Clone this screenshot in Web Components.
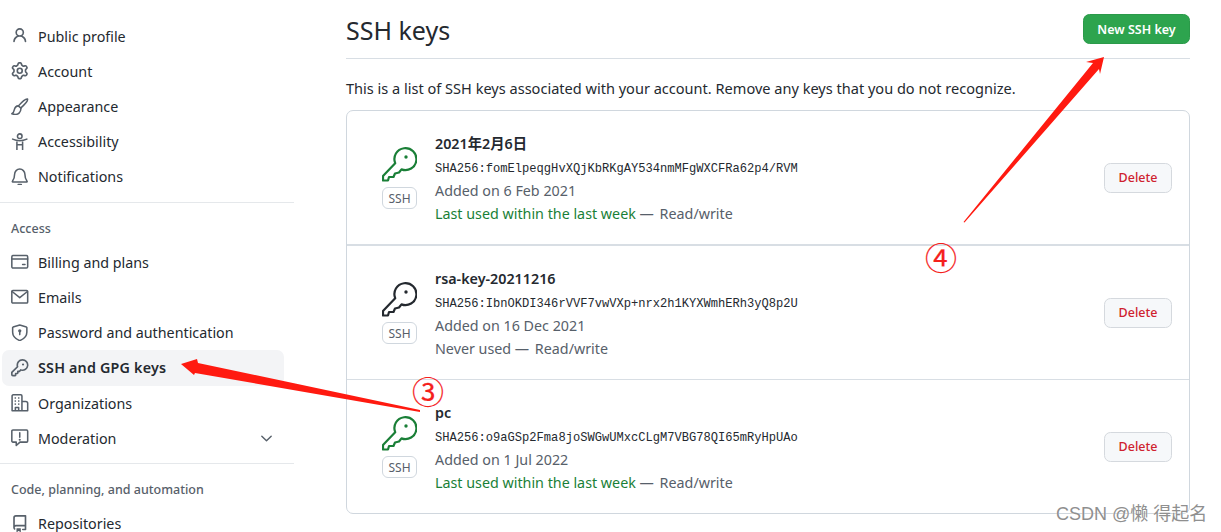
<!DOCTYPE html>
<html lang="en">
<head>
<meta charset="utf-8">
<title>SSH keys</title>
<style>
  html, body { margin: 0; height: 532px; overflow: hidden; background: #fff; }
</style>
</head>
<body>
<gh-settings>
  <side-nav slot="side">
    <nav-item icon="person">Public profile</nav-item>
    <nav-item icon="gear">Account</nav-item>
    <nav-item icon="paintbrush">Appearance</nav-item>
    <nav-item icon="accessibility">Accessibility</nav-item>
    <nav-item icon="bell">Notifications</nav-item>
    <nav-heading>Access</nav-heading>
    <nav-item icon="card">Billing and plans</nav-item>
    <nav-item icon="mail">Emails</nav-item>
    <nav-item icon="shield">Password and authentication</nav-item>
    <nav-item icon="key" selected>SSH and GPG keys</nav-item>
    <nav-item icon="org">Organizations</nav-item>
    <nav-item icon="report" expand>Moderation</nav-item>
    <nav-heading>Code, planning, and automation</nav-heading>
    <nav-item icon="repo">Repositories</nav-item>
  </side-nav>
  <ssh-panel slot="main">
    <key-row used name="2021年2月6日" sha="SHA256:fomElpeqgHvXQjKbRKgAY534nmMFgWXCFRa62p4/RVM" added="Added on 6 Feb 2021" last="Last used within the last week"></key-row>
    <key-row thick name="rsa-key-20211216" sha="SHA256:IbnOKDI346rVVF7vwVXp+nrx2h1KYXWmhERh3yQ8p2U" added="Added on 16 Dec 2021" last="Never used"></key-row>
    <key-row used name="pc" sha="SHA256:o9aGSp2Fma8joSWGwUMxcCLgM7VBG78QI65mRyHpUAo" added="Added on 1 Jul 2022" last="Last used within the last week"></key-row>
  </ssh-panel>
</gh-settings>
<red-notes></red-notes>

<script>
const FONT = '"Noto Sans", "Noto Sans CJK SC", sans-serif';

// 16px octicons, some drawn as strokes
const ICONS = {
  person: '<path fill="currentColor" d="M10.561 8.073a6.005 6.005 0 0 1 3.432 5.142.75.75 0 1 1-1.498.07 4.5 4.5 0 0 0-8.99 0 .75.75 0 0 1-1.498-.07 6.004 6.004 0 0 1 3.431-5.142 3.999 3.999 0 1 1 5.123 0ZM10.5 5a2.5 2.5 0 1 0-5 0 2.5 2.5 0 0 0 5 0Z"/>',
  gear: '<path fill="currentColor" d="M8 0a8.2 8.2 0 0 1 .701.031C9.444.095 9.99.645 10.16 1.29l.288 1.107c.018.066.079.158.212.224.231.114.454.243.668.386.123.082.233.09.299.071l1.103-.303c.644-.176 1.392.021 1.82.63.27.385.506.792.704 1.218.315.675.111 1.422-.364 1.891l-.814.806c-.049.048-.098.147-.088.294.016.257.016.515 0 .772-.01.147.038.246.088.294l.814.806c.475.469.679 1.216.364 1.891a7.977 7.977 0 0 1-.704 1.217c-.428.61-1.176.807-1.82.63l-1.102-.302c-.067-.019-.177-.011-.3.071a5.909 5.909 0 0 1-.668.386c-.133.066-.194.158-.211.224l-.29 1.106c-.168.646-.715 1.196-1.458 1.26a8.006 8.006 0 0 1-1.402 0c-.743-.064-1.289-.614-1.458-1.26l-.289-1.106c-.018-.066-.079-.158-.212-.224a5.738 5.738 0 0 1-.668-.386c-.123-.082-.233-.09-.299-.071l-1.103.303c-.644.176-1.392-.021-1.82-.63a8.12 8.12 0 0 1-.704-1.218c-.315-.675-.111-1.422.363-1.891l.815-.806c.05-.048.098-.147.088-.294a6.214 6.214 0 0 1 0-.772c.01-.147-.038-.246-.088-.294l-.815-.806C.635 6.045.431 5.298.746 4.623a7.92 7.92 0 0 1 .704-1.217c.428-.61 1.176-.807 1.82-.63l1.102.302c.067.019.177.011.3-.071.214-.143.437-.272.668-.386.133-.066.194-.158.211-.224l.29-1.106C6.009.645 6.556.095 7.299.03 7.53.01 7.764 0 8 0Zm-.571 1.525c-.036.003-.108.036-.137.146l-.289 1.105c-.147.561-.549.967-.998 1.189-.173.086-.34.183-.5.29-.417.278-.97.423-1.529.27l-1.103-.303c-.109-.03-.175.016-.195.045-.22.312-.412.644-.573.99-.014.031-.021.11.059.19l.815.806c.411.406.562.957.53 1.456a4.709 4.709 0 0 0 0 .582c.032.499-.119 1.05-.53 1.456l-.815.806c-.081.08-.073.159-.059.19.162.346.353.677.573.989.02.03.085.076.195.046l1.102-.303c.56-.153 1.113-.008 1.53.27.161.107.328.204.501.29.447.222.85.629.997 1.189l.289 1.105c.029.109.101.143.137.146a6.6 6.6 0 0 0 1.142 0c.036-.003.108-.036.137-.146l.289-1.105c.147-.561.549-.967.998-1.189.173-.086.34-.183.5-.29.417-.278.97-.423 1.529-.27l1.103.303c.109.029.175-.016.195-.045.22-.313.411-.644.573-.99.014-.031.021-.11-.059-.19l-.815-.806c-.411-.406-.562-.957-.53-1.456a4.709 4.709 0 0 0 0-.582c-.032-.499.119-1.05.53-1.456l.815-.806c.081-.08.073-.159.059-.19a6.464 6.464 0 0 0-.573-.989c-.02-.03-.085-.076-.195-.046l-1.102.303c-.56.153-1.113.008-1.53-.27a4.44 4.44 0 0 0-.501-.29c-.447-.222-.85-.629-.997-1.189l-.289-1.105c-.029-.11-.101-.143-.137-.146a6.6 6.6 0 0 0-1.142 0ZM11 8a3 3 0 1 1-6 0 3 3 0 0 1 6 0ZM9.5 8a1.5 1.5 0 1 0-3.001.001A1.5 1.5 0 0 0 9.5 8Z"/>',
  paintbrush: '<g class="s"><path d="M15.1.9c-1.3-.5-5.2 2.7-8.3 6.3l2 2c3.6-3.1 6.8-7 6.3-8.3Z"/><path d="M6.8 7.2C4.6 7.3 3.4 8.8 3 10.8c-.3 1.6-1 2.8-2.2 3.6 2.3.9 4.9.9 6.6-.6 1.1-1 1.7-2.6 1.8-4.6"/></g>',
  accessibility: '<g class="s"><circle cx="8" cy="2.9" r="2.1"/><path d="M1.5 5.6c2 .9 4.2 1.4 6.5 1.4s4.500-.5 6.500-1.400M5.400 6.800V15.200M10.600 6.800V15.200M5.400 10.800h5.200"/></g>',
  bell: '<g class="s"><path d="M8 1a4.700 4.700 0 0 0-4.700 4.700c0 2.700-.6 4.700-2 6.500a.3.3 0 0 0 .2.500h13a.3.3 0 0 0 .2-.500c-1.400-1.800-2-3.800-2-6.500A4.700 4.700 0 0 0 8 1Z"/><path d="M6.600 15.200h2.800"/></g>',
  card: '<g class="s"><rect x=".75" y="2.250" width="14.500" height="11.500" rx="1.200"/><path d="M.75 5.400h14.500M10.600 10.500h2.200"/></g>',
  mail: '<g class="s"><rect x=".75" y="2.250" width="14.500" height="11.500" rx="1"/><path d="M1 3.200 8 8.800l7-5.600"/></g>',
  shield: '<g class="s"><path d="M8 .9 1.900 2.800c-.2.100-.4.300-.4.500V7.500c0 3.500 2.500 6 6.500 7.700 4-1.700 6.500-4.200 6.500-7.700V3.300c0-.2-.2-.4-.4-.5Z"/><path d="M8 6.500v3.200"/></g><circle cx="8" cy="6.200" r="1.500" fill="currentColor"/>',
  key: '<path fill="currentColor" d="M10.500 0a5.499 5.499 0 1 1-1.288 10.848l-.932.932a.749.749 0 0 1-.53.22H7v.75a.749.749 0 0 1-.22.53l-.5.5a.749.749 0 0 1-.53.22H5v.75a.749.749 0 0 1-.22.53l-.5.5a.749.749 0 0 1-.53.22h-2A1.750 1.750 0 0 1 0 14.250v-2c0-.199.079-.389.22-.53l4.932-4.932A5.500 5.500 0 0 1 10.500 0Zm-4 5.500c-.001.431.069.86.205 1.269a.75.75 0 0 1-.181.768L1.500 12.560v1.690c0 .138.112.25.25.25h1.690l.06-.06v-1.190a.75.75 0 0 1 .75-.75h1.190l.06-.06v-1.190a.75.75 0 0 1 .75-.75h1.190l1.023-1.025a.75.75 0 0 1 .768-.18A4 4 0 1 0 6.500 5.500ZM11 6a1 1 0 1 1 0-2 1 1 0 0 1 0 2Z"/>',
  org: '<g class="s"><path d="M1 15.250V1.800C1 1.200 1.400.75 2 .75h7c.6 0 1 .45 1 1.050v13.450ZM10 6.800h3.500c1 0 1.750.8 1.750 1.700v6.750H10M4 15v-2.700h3V15"/></g><g fill="currentColor"><rect x="3.300" y="3" width="1.300" height="1.300"/><rect x="6.400" y="3" width="1.300" height="1.300"/><rect x="3.300" y="5.800" width="1.300" height="1.300"/><rect x="6.400" y="5.800" width="1.300" height="1.300"/><rect x="3.300" y="8.600" width="1.300" height="1.300"/><rect x="6.400" y="8.600" width="1.300" height="1.300"/></g>',
  report: '<g class="s"><path d="M1.750 1h12.500c.55 0 1 .45 1 1v9c0 .55-.45 1-1 1H8.200l-3.400 3.100V12H1.750c-.55 0-1-.45-1-1V2c0-.55.45-1 1-1Z"/><path d="M8 3.500v4"/></g><circle cx="8" cy="9.800" r="1" fill="currentColor"/>',
  repo: '<path fill="currentColor" d="M2 2.500A2.500 2.500 0 0 1 4.500 0h8.750a.75.75 0 0 1 .75.75v12.500a.75.75 0 0 1-.75.75h-2.500a.75.75 0 0 1 0-1.500h1.750v-2h-8a1 1 0 0 0-.714 1.700.75.75 0 1 1-1.072 1.050A2.495 2.495 0 0 1 2 11.500Zm10.500-1h-8a1 1 0 0 0-1 1v6.708A2.486 2.486 0 0 1 4.500 9h8ZM5 12.250a.25.25 0 0 1 .25-.25h3.500a.25.25 0 0 1 .25.25v3.250a.25.25 0 0 1-.4.2l-1.450-1.087a.249.249 0 0 0-.3 0L5.400 15.700a.25.25 0 0 1-.4-.2Z"/>',
  chevron: '<path d="M3 5.500 8 10.500l5-5" fill="none" stroke="currentColor" stroke-width="1.500" stroke-linecap="round" stroke-linejoin="round"/>'
};

class GhSettings extends HTMLElement {
  constructor() {
    super();
    this.attachShadow({ mode: "open" });
    this.shadowRoot.innerHTML = `
      <style>
        :host { display: flex; height: 532px; overflow: hidden; font-family: ${FONT}; color: #24292f; }
        .side { flex: 0 0 294px; }
        .main { flex: 0 0 844px; margin-left: 52px; }
      </style>
      <div class="side"><slot name="side"></slot></div>
      <div class="main"><slot name="main"></slot></div>
    `;
  }
}

class GhIcon extends HTMLElement {
  connectedCallback() {
    if (this.shadowRoot) return;
    this.attachShadow({ mode: "open" });
    this.shadowRoot.innerHTML = `
      <style>
        :host { display: block; width: 17.5px; height: 17.5px; color: #57606a; }
        svg { display: block; width: 100%; height: 100%; }
        .s * , .s { fill: none; stroke: currentColor; stroke-width: 1.400; stroke-linecap: round; stroke-linejoin: round; }
      </style>
      <svg viewBox="0 0 16 16">${ICONS[this.getAttribute("name")]}</svg>
    `;
  }
}

class SideNav extends HTMLElement {
  constructor() {
    super();
    this.attachShadow({ mode: "open" });
    this.shadowRoot.innerHTML = `
      <style>
        :host { display: block; padding-top: 18.600px; }
      </style>
      <slot></slot>
    `;
  }
}

class NavItem extends HTMLElement {
  connectedCallback() {
    if (this.shadowRoot) return;
    this.attachShadow({ mode: "open" });
    const chevron = this.hasAttribute("expand")
      ? '<gh-icon class="chev" name="chevron"></gh-icon>' : "";
    this.shadowRoot.innerHTML = `
      <style>
        :host { display: flex; align-items: center; gap: 9.500px; height: 35.100px; margin: 0 10px 0 2px; padding: 0 10px 0 9px; box-sizing: border-box; border-radius: 7px; font-size: 14.300px; color: #24292f; }
        :host([selected]) { margin-top: .6px; background: #f3f4f6; font-weight: 600; letter-spacing: .2px; }
        .label { flex: 1; white-space: nowrap; }
        gh-icon { flex: none; }
        .chev { width: 15px; height: 15px; }
      </style>
      <gh-icon name="${this.getAttribute("icon")}"></gh-icon>
      <span class="label"><slot></slot></span>
      ${chevron}
    `;
  }
}

class NavHeading extends HTMLElement {
  constructor() {
    super();
    this.attachShadow({ mode: "open" });
    this.shadowRoot.innerHTML = `
      <style>
        :host { display: block; margin-top: 7.500px; padding: 14px 0 4px 11px; border-top: 1px solid #e5e8eb; font-size: 12.500px; line-height: 24px; font-weight: 500; color: #57606a; }
      </style>
      <slot></slot>
    `;
  }
}

class GhButton extends HTMLElement {
  constructor() {
    super();
    this.attachShadow({ mode: "open" });
    this.shadowRoot.innerHTML = `
      <style>
        :host { display: inline-flex; align-items: center; justify-content: center; box-sizing: border-box; height: 30px; border-radius: 6.500px; font-size: 12.500px; font-weight: 500; white-space: nowrap; border: 1px solid #d5d9de; background: #f6f8fa; color: #cf222e; }
        :host([primary]) { background: #2da44e; border-color: #2b9a4a; color: #fff; font-weight: 600; }
      </style>
      <slot></slot>
    `;
  }
}

class SshPanel extends HTMLElement {
  constructor() {
    super();
    this.attachShadow({ mode: "open" });
    this.shadowRoot.innerHTML = `
      <style>
        :host { display: block; }
        header { display: flex; align-items: center; justify-content: space-between; height: 58px; border-bottom: 1px solid #d8dee4; }
        h2 { margin: 1px 0 0; font-size: 25px; font-weight: 400; }
        gh-button { width: 107px; }
        p { margin: 18px 0 11px; font-size: 14.550px; line-height: 22px; }
        .card { border: 1px solid #d0d7de; border-radius: 7px; }
      </style>
      <header>
        <h2>SSH keys</h2>
        <gh-button primary>New SSH key</gh-button>
      </header>
      <p>This is a list of SSH keys associated with your account. Remove any keys that you do not recognize.</p>
      <div class="card"><slot></slot></div>
    `;
  }
}

class KeyRow extends HTMLElement {
  connectedCallback() {
    if (this.shadowRoot) return;
    this.attachShadow({ mode: "open" });
    const a = (n) => this.getAttribute(n);
    this.shadowRoot.innerHTML = `
      <style>
        :host { display: flex; align-items: center; height: 133px; padding: 0 17px 0 35px; color: #24292f; }
        :host(:not(:first-child)) { border-top: 1px solid #d8dee4; }
        :host([thick]) { border-top: 2px solid #d8dee4; }
        :host([used]) .k { color: #1a7f37; }
        .kind { flex: none; width: 35px; margin-right: 18px; display: flex; flex-direction: column; gap: 5px; padding-top: 1px; }
        .k { display: block; width: 35px; height: 35px; }
        .badge { box-sizing: border-box; height: 22px; line-height: 21px; text-align: center; border: 1px solid #d0d7de; border-radius: 6px; font-size: 12px; color: #57606a; }
        .info { flex: 1; padding: 2px 0 1.500px; }
        .name { font-size: 14.300px; line-height: 26px; font-weight: 600; }
        .sha { font-family: "Liberation Mono", monospace; font-size: 12.100px; line-height: 24px; }
        .meta { font-size: 14.300px; line-height: 22px; color: #57606a; margin-top: -1.500px; }
        .meta + .meta { margin-top: 1px; }
        .last { color: #1a7f37; }
        .dash { letter-spacing: 2px; }
        :host(:not([used])) .last { color: inherit; }
        gh-button { width: 68px; }
      </style>
      <div class="kind">
        <svg class="k" viewBox="0 0 35 35" fill="none" stroke="currentColor" stroke-width="2.200" stroke-linejoin="round">
          <path d="M13.200 16.200A11 11 0 1 1 19.500 22.400L17 25.500 13 26.500 11.500 30 7 30 6 33.500 1 33.500 1 29Z"/>
          <circle cx="24" cy="10" r="1.700" fill="currentColor" stroke="none"/>
        </svg>
        <div class="badge">SSH</div>
      </div>
      <div class="info">
        <div class="name">${a("name")}</div>
        <div class="sha">${a("sha")}</div>
        <div class="meta">${a("added")}</div>
        <div class="meta"><span class="last">${a("last")}</span> <span class="dash">—</span> Read/write</div>
      </div>
      <gh-button>Delete</gh-button>
    `;
  }
}

// the hand drawn red arrows and the watermark sit over the page
class RedNotes extends HTMLElement {
  constructor() {
    super();
    this.attachShadow({ mode: "open" });
    this.shadowRoot.innerHTML = `
      <style>
        :host { position: absolute; left: 0; top: 0; width: 1221px; height: 532px; pointer-events: none; }
        svg { position: absolute; left: 0; top: 0; }
        .num { position: absolute; width: 40px; height: 30px; text-align: center; font: 32px/30px "Noto Sans CJK SC", sans-serif; color: #f5211c; -webkit-text-stroke: .2px #f5211c; }
        .mark { position: absolute; left: 1056px; top: 502px; font: 18px/24px "Liberation Sans", "Noto Sans CJK SC", sans-serif; color: #8f8f8f; white-space: nowrap; text-shadow: 0 0 1px #fff; }
      </style>
      <svg width="1221" height="532">
        <polygon fill="#ff1a10" points="181,364 197,359 198,363 420,410 420,412 195,373 194,375"/>
        <polygon fill="#ff1a10" points="1104,57 1086,62 1093,63 963.500,222 964.500,222.500 1099,69 1100,74"/>
      </svg>
      <div class="num" style="left:408px;top:375px">③</div>
      <div class="num" style="left:921px;top:241px">④</div>
      <div class="mark">CSDN @懒 得起名</div>
    `;
  }
}

customElements.define("gh-settings", GhSettings);
customElements.define("gh-icon", GhIcon);
customElements.define("side-nav", SideNav);
customElements.define("nav-item", NavItem);
customElements.define("nav-heading", NavHeading);
customElements.define("gh-button", GhButton);
customElements.define("ssh-panel", SshPanel);
customElements.define("key-row", KeyRow);
customElements.define("red-notes", RedNotes);
</script>
</body>
</html>
